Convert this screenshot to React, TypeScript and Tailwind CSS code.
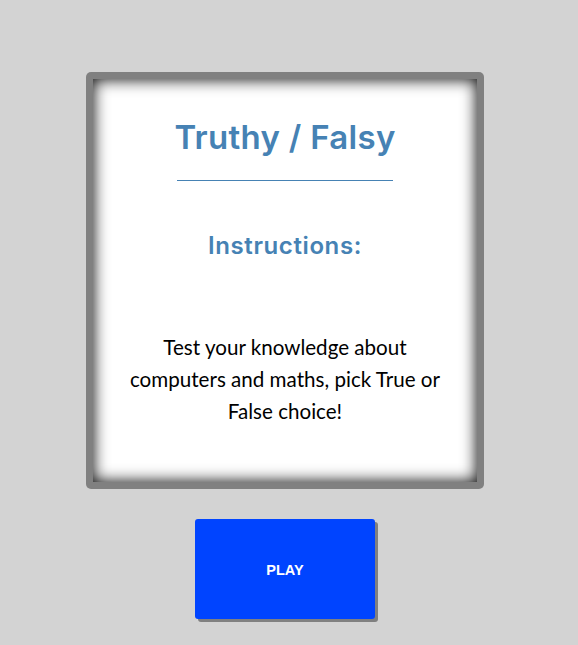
export default function App() {
  return (
    <div className="min-h-[645px] bg-[#d3d3d3] font-['Lato',sans-serif]">
      <div className="w-[570px] flex flex-col items-center pt-[72px]">
        <div className="w-[398px] h-[417px] bg-[#808080] rounded-[5px] p-[7px]">
          <div className="w-full h-full bg-white shadow-[inset_0_0_16px_#000] flex flex-col items-center">
            <h1 className="mt-[38px] h-[40px] text-[#4682b4] text-[33px] leading-[40px] font-semibold tracking-[0.3px] font-['Inter',sans-serif]">
              Truthy / Falsy
            </h1>
            <div className="mt-[23px] w-[216px] h-px bg-[#4682b4]" />
            <h2 className="mt-[50px] text-[#4682b4] text-[24px] leading-[30px] font-semibold tracking-[0.6px] font-['Inter',sans-serif]">
              Instructions:
            </h2>
            <p className="mt-[70px] w-[340px] text-center text-black text-[20.6px] leading-[32px]">
              Test your knowledge about computers and maths, pick True or False choice!
            </p>
          </div>
        </div>
        <button className="mt-[30px] w-[180px] h-[100px] bg-[#0044ff] rounded-[3px] shadow-[3px_3px_0_#808080] text-white text-[14.5px] font-bold font-['Liberation_Sans',sans-serif] pt-[4px]">
          PLAY
        </button>
      </div>
    </div>
  );
}
